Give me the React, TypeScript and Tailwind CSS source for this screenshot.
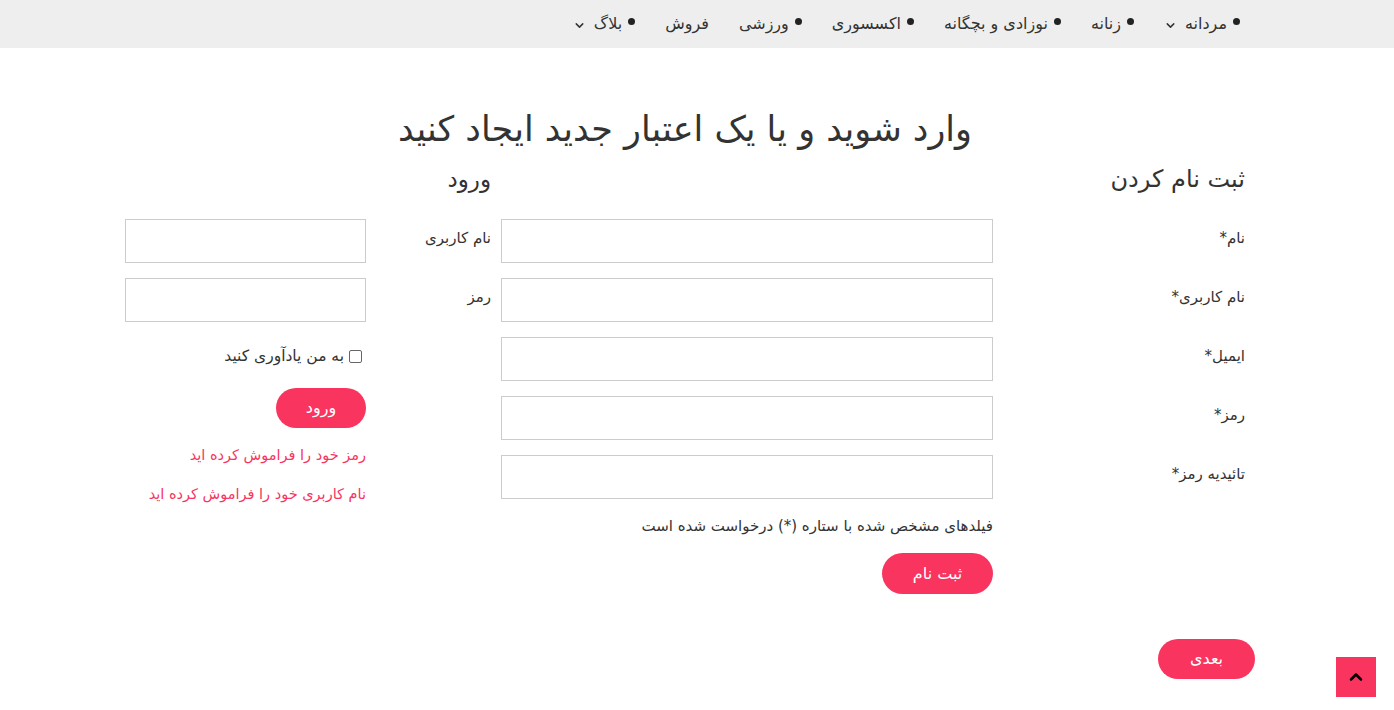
import { ChevronDown, ChevronUp } from "lucide-react";

const navItems = [
  { label: "مردانه", dot: true, caret: true },
  { label: "زنانه", dot: true, caret: false },
  { label: "نوزادی و بچگانه", dot: true, caret: false },
  { label: "اکسسوری", dot: true, caret: false },
  { label: "ورزشی", dot: true, caret: false },
  { label: "فروش", dot: false, caret: false },
  { label: "بلاگ", dot: true, caret: true },
];

const registerFields = ["نام*", "نام کاربری*", "ایمیل*", "رمز*", "تائیدیه رمز*"];

const App = () => {
  return (
    <div
      dir="rtl"
      className="min-h-screen bg-white text-[#333] font-['DejaVu_Sans',sans-serif]"
    >
      {/* top menu */}
      <nav className="h-12 bg-[#eeeeee] flex items-center pr-[154px] gap-[30px] text-[16px] text-[#333]">
        {navItems.map((item) => (
          <div key={item.label} className="flex items-center">
            {item.dot && (
              <span className="w-[7px] h-[7px] rounded-full bg-[#222] ml-[6px] -mt-[5px]" />
            )}
            <span className="leading-[22px]">{item.label}</span>
            {item.caret && (
              <ChevronDown size={13} strokeWidth={2.75} className="mr-[8px] mt-[3px] text-[#333]" />
            )}
          </div>
        ))}
      </nav>

      <main className="w-[1120px] mr-[149px]">
        <h1 className="text-center text-[35px] leading-[43px] mt-[60px] text-[#333]">
          وارد شوید و یا یک اعتبار جدید ایجاد کنید
        </h1>

        <div className="flex gap-[10px] mt-[10px]">
          {/* register */}
          <section className="w-[744px]">
            <h2 className="text-[24px] leading-[36px] text-[#333]">ثبت نام کردن</h2>
            <div className="mt-[22px] flex flex-col gap-[15px]">
              {registerFields.map((f) => (
                <div key={f} className="flex items-start">
                  <label className="w-[252px] pt-[8px] text-[15px] leading-[22px] text-[#333]">{f}</label>
                  <input className="w-[492px] h-[44px] border border-[#cccccc] bg-white outline-none" />
                </div>
              ))}
            </div>
            <div className="pr-[252px]">
              <p className="mt-[16px] text-[15px] leading-[22px] text-[#333]">
                فیلدهای مشخص شده با ستاره (*) درخواست شده است
              </p>
              <button className="mt-[16px] w-[111px] h-[41px] rounded-full bg-[#f8345f] text-white text-[16px] font-medium">
                ثبت نام
              </button>
            </div>
          </section>

          {/* login */}
          <section className="w-[366px]">
            <h2 className="text-[23px] leading-[36px] text-[#333]">ورود</h2>
            <div className="mt-[22px] flex flex-col gap-[15px]">
              {["نام کاربری", "رمز"].map((f) => (
                <div key={f} className="flex items-start">
                  <label className="w-[125px] pt-[8px] text-[15px] leading-[22px] text-[#333]">{f}</label>
                  <input className="w-[241px] h-[44px] border border-[#cccccc] bg-white outline-none" />
                </div>
              ))}
            </div>
            <div className="pr-[125px]">
              <div className="mt-[23px] flex items-center text-[15.5px] leading-[22px]">
                <span className="w-[13px] h-[13px] border border-[#666] rounded-[2px] mr-[4px] ml-[5px]" />
                <span>به من یادآوری کنید</span>
              </div>
              <button className="mt-[21px] w-[90px] h-[40px] rounded-full bg-[#f8345f] text-white text-[16px] font-medium">
                ورود
              </button>
              <a className="block mt-[15px] text-[14.5px] leading-[24px] text-[#f8345f]">
                رمز خود را فراموش کرده اید
              </a>
              <a className="block mt-[15px] text-[14.5px] leading-[24px] text-[#f8345f]">
                نام کاربری خود را فراموش کرده اید
              </a>
            </div>
          </section>
        </div>

        <div className="-mr-[10px] mt-[45px] flex">
          <button className="w-[97px] h-[40px] rounded-full bg-[#f8345f] text-white text-[16px] font-medium">
            بعدی
          </button>
        </div>
      </main>

      <button className="fixed bottom-[13px] right-[18px] w-10 h-10 bg-[#f8345f] flex items-center justify-center">
        <ChevronUp size={20} strokeWidth={3} className="text-black" />
      </button>
    </div>
  );
};

export default App;
